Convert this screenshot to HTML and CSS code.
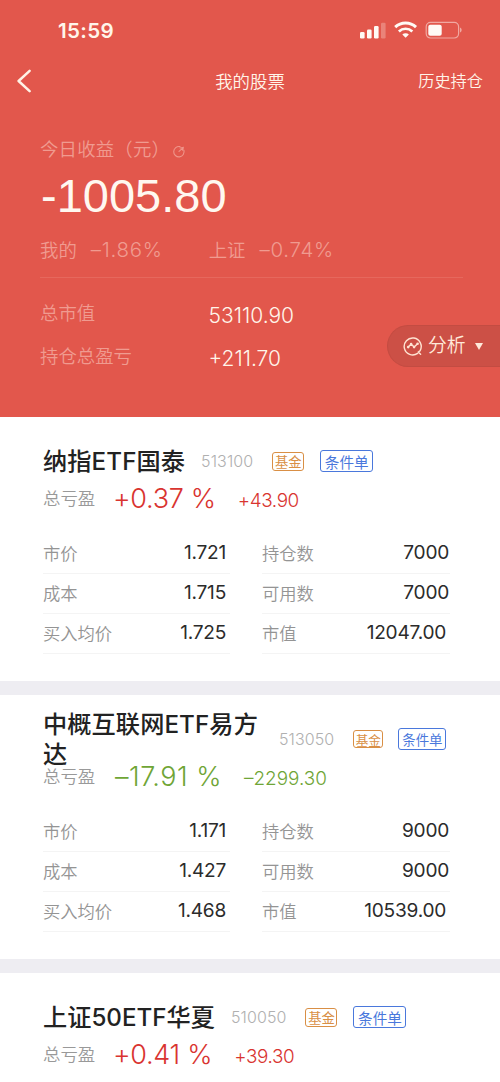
FILE: index.html
```html
<!DOCTYPE html>
<html lang="zh-CN">
<head>
<meta charset="utf-8">
<title>我的股票</title>
<link rel="stylesheet" href="styles.css">
</head>
<body>
<header class="hero">
  <div class="status">
    <span class="clock">15:59</span>
    <svg class="status-icons" width="104" height="20" viewBox="0 0 104 20">
      <g fill="#fffaf5">
        <rect x="0" y="12" width="4.6" height="6.5" rx="1.2"/>
        <rect x="7" y="9.6" width="4.6" height="8.9" rx="1.2"/>
        <rect x="14" y="6" width="4.6" height="12.5" rx="1.2"/>
        <rect x="21" y="2.7" width="4.6" height="15.8" rx="1.2" opacity=".27"/>
        <path d="M45.6 17.8l-3.3-3.3a4.7 4.7 0 0 1 6.6 0z"/>
        <rect x="68.3" y="4.7" width="13.4" height="11" rx="2"/>
        <path d="M100 7.5c2.2.7 2.2 4.3 0 5z" opacity=".5"/>
      </g>
      <g fill="none" stroke="#fffaf5">
        <path d="M35.2 7.2a15.2 15.2 0 0 1 20.8 0" stroke-width="3"/>
        <path d="M38.9 11.4a9.8 9.8 0 0 1 13.4 0" stroke-width="2.7"/>
        <rect x="66.2" y="2.4" width="32.4" height="15.6" rx="4.4" stroke-width="1.2" opacity=".5"/>
      </g>
    </svg>
  </div>
  <nav class="nav">
    <svg class="back" width="16" height="24" viewBox="0 0 16 24"><path d="M12.6 1.8L1.6 12l11 10.2" fill="none" stroke="#fff3e6" stroke-width="2.5" stroke-linecap="round" stroke-linejoin="round"/></svg>
    <h1 class="nav-title">我的股票</h1>
    <span class="nav-link">历史持仓</span>
  </nav>
  <div class="today">
    <span class="hero-label">今日收益（元）</span>
    <svg class="refresh" width="14" height="14" viewBox="0 0 14 14"><path d="M11.9 6.2A5.2 5.2 0 1 1 8 2.6" fill="none" stroke="#ef958a" stroke-width="1.1" stroke-linecap="round"/><path d="M7 7.4l4-3.6M8 4l3.3-.6-.5 3" fill="none" stroke="#ef958a" stroke-width="1.1" stroke-linecap="round"/></svg>
  </div>
  <div class="profit">-1005.80</div>
  <div class="compare">
    <span class="hero-label">我的</span><span class="rate">–1.86%</span>
    <span class="hero-label index">上证</span><span class="rate">–0.74%</span>
  </div>
  <div class="totals">
    <div class="total"><span class="hero-label">总市值</span><span class="amount">53110.90</span></div>
    <div class="total"><span class="hero-label">持仓总盈亏</span><span class="amount">+211.70</span></div>
  </div>
  <div class="analyse">
    <svg width="20" height="20" viewBox="0 0 20 20"><g fill="none" stroke="#ffe3d2" stroke-width="1.4" stroke-linecap="round" stroke-linejoin="round"><path d="M14.6 17.4A8.5 8.5 0 1 1 17 14.8L15.2 16l2.4 2.2"/><path d="M5.3 11l2.8-2.9 3 3 3.5-3.4"/></g><g fill="#ffe3d2"><circle cx="5.2" cy="11.1" r="1.3"/><circle cx="8.1" cy="8" r="1.3"/><circle cx="11.1" cy="11.1" r="1.3"/><circle cx="14.6" cy="7.7" r="1.3"/></g></svg>
    <span class="analyse-text">分析</span>
    <span class="caret"></span>
  </div>
</header>

<main>
  <section class="card">
    <div class="head">
      <h2 class="name">纳指ETF国泰</h2><span class="code">513100</span>
      <span class="tag fund">基金</span><span class="tag order">条件单</span>
    </div>
    <div class="gain up"><span class="gain-label">总亏盈</span><span class="percent">+0.37 %</span><span class="sum">+43.90</span></div>
    <div class="table">
      <div class="row"><span>市价</span><b class="val">1.721</b></div>
      <div class="row"><span>持仓数</span><b class="val count">7000</b></div>
      <div class="row"><span>成本</span><b class="val">1.715</b></div>
      <div class="row"><span>可用数</span><b class="val count">7000</b></div>
      <div class="row"><span>买入均价</span><b class="val">1.725</b></div>
      <div class="row"><span>市值</span><b class="val">12047.00</b></div>
    </div>
  </section>
  <section class="card compact">
    <div class="head">
      <h2 class="name">中概互联网ETF易方达</h2><span class="code">513050</span>
      <span class="tag fund">基金</span><span class="tag order">条件单</span>
    </div>
    <div class="gain down"><span class="gain-label">总亏盈</span><span class="percent">–17.91 %</span><span class="sum">–2299.30</span></div>
    <div class="table">
      <div class="row"><span>市价</span><b class="val">1.171</b></div>
      <div class="row"><span>持仓数</span><b class="val count">9000</b></div>
      <div class="row"><span>成本</span><b class="val">1.427</b></div>
      <div class="row"><span>可用数</span><b class="val count">9000</b></div>
      <div class="row"><span>买入均价</span><b class="val">1.468</b></div>
      <div class="row"><span>市值</span><b class="val">10539.00</b></div>
    </div>
  </section>
  <section class="card last">
    <div class="head">
      <h2 class="name">上证50ETF华夏</h2><span class="code">510050</span>
      <span class="tag fund">基金</span><span class="tag order">条件单</span>
    </div>
    <div class="gain up"><span class="gain-label">总亏盈</span><span class="percent">+0.41 %</span><span class="sum">+39.30</span></div>
  </section>
</main>
</body>
</html>
```

FILE: styles.css
```css
* { box-sizing: border-box; }
body {
  margin: 0;
  width: 500px;
  background: #eeedf2;
  font-family: Inter, "Noto Sans CJK SC", sans-serif;
  white-space: nowrap;
}
h1, h2 { margin: 0; font-weight: 400; }

.hero { position: relative; height: 417px; background: #e2574c; color: #fff5ea; }
.status { display: flex; align-items: center; justify-content: space-between; height: 60px; padding: 0 36px 0 58px; }
.clock { font-size: 20.6px; font-weight: 600; letter-spacing: .3px; }
.nav { display: grid; grid-template-columns: 1fr auto 1fr; align-items: center; height: 42px; padding: 0 17px; }
.nav-title { padding-top: 1px; font-size: 17.4px; font-weight: 350; line-height: 24px; }
.nav-link { justify-self: end; font-size: 16.2px; font-weight: 350; line-height: 24px; }

.hero-label { color: #f09b90; font-size: 18.4px; font-weight: 350; line-height: 24px; }
.today { display: flex; align-items: center; height: 30px; margin: 32px 0 0 40px; }
.today .hero-label { letter-spacing: .2px; }
.refresh { margin: 3px 0 0 2px; }
.profit { height: 64px; margin-left: 41px; line-height: 64px; font-family: "Liberation Sans", Arial, sans-serif; font-size: 47px; color: #fff8f0; }
.compare { display: flex; align-items: center; height: 50px; margin: 0 37px 0 40px; padding-bottom: 6px; border-bottom: 1px solid #e6685d; }
.rate { margin-left: 14px; font-size: 20.5px; font-weight: 350; letter-spacing: .7px; color: #f09b90; }
.index { margin-left: 46px; }
.totals { padding: 13px 0 0 40px; }
.total { display: flex; align-items: center; height: 43px; }
.total .hero-label { width: 168.5px; }
.amount { padding-top: 6px; font-size: 21px; font-weight: 350; letter-spacing: 0; }

.analyse {
  position: absolute;
  right: 0;
  top: 325px;
  display: flex;
  align-items: center;
  width: 113px;
  height: 42px;
  padding-left: 15px;
  background: #cc5046;
  border: 1px solid #c34c42;
  border-right: 0;
  border-radius: 21px 0 0 21px;
}
.analyse-text { margin-left: 5px; font-size: 18.8px; font-weight: 350; line-height: 24px; color: #ffe9da; }
.caret { margin-left: 9px; border: 4.5px solid transparent; border-top: 7px solid #ffe9da; border-bottom: 0; }

.card { height: 264px; margin-bottom: 14px; padding: 24px 50px 0 43px; background: #fff; }
.last { height: 109px; margin-bottom: 0; }
.head { display: flex; align-items: center; height: 40px; }
.name { padding-top: 2px; font-size: 24.2px; font-weight: 500; line-height: 30px; letter-spacing: .1px; color: #222; }
.last .name { letter-spacing: 0; }
.code { margin-left: 16px; font-size: 16px; font-weight: 350; letter-spacing: .1px; color: #b0b0b0; }
.tag { display: flex; align-items: center; justify-content: center; border: 1px solid; border-radius: 3px; }
.fund { width: 32px; height: 19px; margin-left: 19px; font-size: 13.3px; color: #d98f45; }
.order { width: 53px; height: 22px; margin-left: 16px; font-size: 14.6px; color: #4a78dc; }
.compact .name { width: 220px; white-space: normal; }
.compact .fund { width: 30px; height: 18px; font-size: 12.6px; }
.compact .order { width: 48px; margin-left: 15px; font-size: 13.4px; }

.gain { display: flex; align-items: center; height: 34px; }
.gain-label { width: 70px; padding-bottom: 2px; font-size: 17.4px; font-weight: 350; color: #999; }
.percent { font-size: 27px; font-weight: 350; letter-spacing: -.3px; }
.sum { margin-left: 22px; padding-top: 4px; font-size: 18.9px; font-weight: 350; letter-spacing: -.4px; }
.up { color: #d93430; }
.down { color: #6fa536; }
.down .gain-label { width: 72px; }
.down .percent { letter-spacing: .5px; }
.down .sum { letter-spacing: 0; }

.table { display: grid; grid-template-columns: 187px 188px; column-gap: 32px; margin-top: 19px; }
.row { display: flex; align-items: center; justify-content: space-between; height: 40px; padding: 0 4px 3px 0; border-bottom: 1px solid #f4f4f4; font-size: 17.3px; font-weight: 350; color: #949494; }
.val { font-size: 19.1px; font-weight: 400; letter-spacing: -.25px; color: #2b2b2b; }
.count { margin-right: -3px; }
```
